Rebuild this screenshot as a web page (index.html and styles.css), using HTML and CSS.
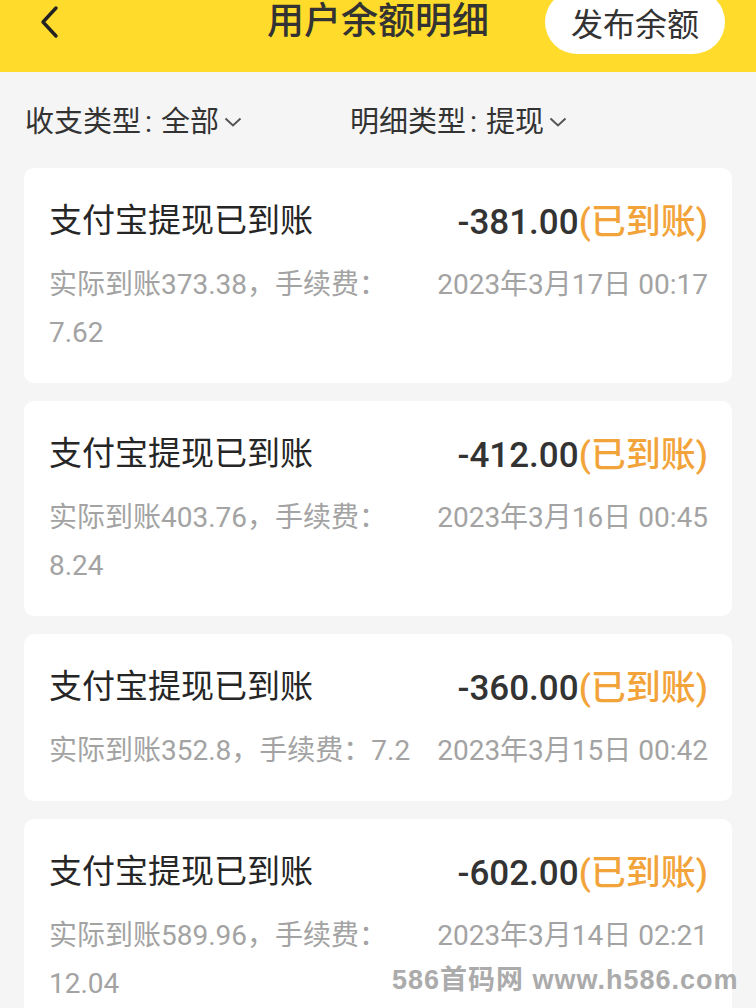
FILE: index.html
```html
<!DOCTYPE html>
<html lang="zh-CN">
<head>
    <meta charset="UTF-8">
    <meta name="viewport" content="width=device-width, initial-scale=1.0">
    <title>用户余额明细</title>
    <link rel="stylesheet" href="styles.css">
</head>
<body>
    <header class="topbar">
        <div class="back">
            <svg width="24" height="34" viewBox="0 0 24 34">
                <polyline points="18,3 5,17 18,31" fill="none" stroke="#222" stroke-width="3.4" stroke-linecap="round" stroke-linejoin="round"/>
            </svg>
        </div>
        <h1 class="title">用户余额明细</h1>
        <div class="right">
            <button class="publish">发布余额</button>
        </div>
    </header>

    <section class="filters">
        <div class="filter filter-first">收支类型<span class="colon">:</span>全部<span class="arrow"><svg width="18" height="10" viewBox="0 0 18 10"><polyline points="1.5,1.5 9,8.5 16.5,1.5" fill="none" stroke="#555" stroke-width="2"/></svg></span></div>
        <div class="filter">明细类型<span class="colon">:</span>提现<span class="arrow"><svg width="18" height="10" viewBox="0 0 18 10"><polyline points="1.5,1.5 9,8.5 16.5,1.5" fill="none" stroke="#555" stroke-width="2"/></svg></span></div>
    </section>

    <main class="list">
        <div class="card">
            <div class="row-top">
                <span class="name">支付宝提现已到账</span>
                <span class="amount">-381.00<span class="status">(已到账)</span></span>
            </div>
            <div class="row-detail">
                <span class="fee">实际到账373.38，手续费：7.62</span>
                <span class="time">2023年3月17日 00:17</span>
            </div>
        </div>

        <div class="card">
            <div class="row-top">
                <span class="name">支付宝提现已到账</span>
                <span class="amount">-412.00<span class="status">(已到账)</span></span>
            </div>
            <div class="row-detail">
                <span class="fee">实际到账403.76，手续费：8.24</span>
                <span class="time">2023年3月16日 00:45</span>
            </div>
        </div>

        <div class="card">
            <div class="row-top">
                <span class="name">支付宝提现已到账</span>
                <span class="amount">-360.00<span class="status">(已到账)</span></span>
            </div>
            <div class="row-detail">
                <span class="fee">实际到账352.8，手续费：7.2</span>
                <span class="time">2023年3月15日 00:42</span>
            </div>
        </div>

        <div class="card">
            <div class="row-top">
                <span class="name">支付宝提现已到账</span>
                <span class="amount">-602.00<span class="status">(已到账)</span></span>
            </div>
            <div class="row-detail">
                <span class="fee">实际到账589.96，手续费：12.04</span>
                <span class="time">2023年3月14日 02:21</span>
            </div>
        </div>
    </main>

    <div class="watermark">586首码网 www.h586.com</div>
</body>
</html>
```

FILE: styles.css
```css
body {
    margin: 0;
    background-color: #f5f5f5;
    font-family: Roboto, "Noto Sans CJK SC", sans-serif;
    color: #2b2b2b;
    overflow: hidden;
}

.topbar {
    display: grid;
    grid-template-columns: 1fr auto 1fr;
    align-items: start;
    height: 72px;
    background-color: #ffdc2b;
}

.back {
    padding-left: 38px;
    padding-top: 5px;
}

.title {
    margin: 0;
    font-size: 37px;
    line-height: 44px;
    font-weight: 500;
    color: #333;
}

.right {
    display: flex;
    justify-content: flex-end;
    padding-right: 31px;
}

.publish {
    margin-top: -10px;
    width: 180px;
    height: 64px;
    border: none;
    border-radius: 32px;
    background-color: #fff;
    font-family: Roboto, "Noto Sans CJK SC", sans-serif;
    font-size: 32px;
    color: #333;
    padding: 0;
}

.filters {
    display: flex;
    padding: 30px 25px 0;
    height: 40px;
    margin-bottom: 26px;
}

.filter {
    font-size: 29px;
    line-height: 40px;
    color: #333;
    display: flex;
    align-items: center;
}

.filter-first {
    width: 325px;
}

.colon {
    margin: 0 9px 0 4px;
}

.arrow {
    margin-left: 5px;
    display: flex;
}

.list {
    display: flex;
    flex-direction: column;
    gap: 18px;
    padding: 0 24px;
}

.card {
    background-color: #fff;
    border-radius: 10px;
    padding: 29px 24px 26px 25px;
}

.row-top {
    display: flex;
    justify-content: space-between;
    align-items: center;
    height: 42px;
    margin-bottom: 22px;
}

.name {
    font-size: 33px;
    color: #262626;
}

.amount {
    font-size: 35px;
    font-weight: 500;
    color: #333;
}

.status {
    color: #f2a43a;
}

.row-detail {
    display: flex;
    gap: 16px;
    font-size: 28px;
    line-height: 48px;
    color: #a3a3a3;
}

.fee {
    flex: 1;
    min-width: 0;
}

.time {
    white-space: nowrap;
}

.watermark {
    position: absolute;
    left: 392px;
    top: 964px;
    line-height: 32px;
    white-space: nowrap;
    font-size: 27px;
    font-weight: bold;
    color: #ababab;
    letter-spacing: 1px;
    font-family: "Liberation Sans", "Noto Sans CJK SC", sans-serif;
}
```
